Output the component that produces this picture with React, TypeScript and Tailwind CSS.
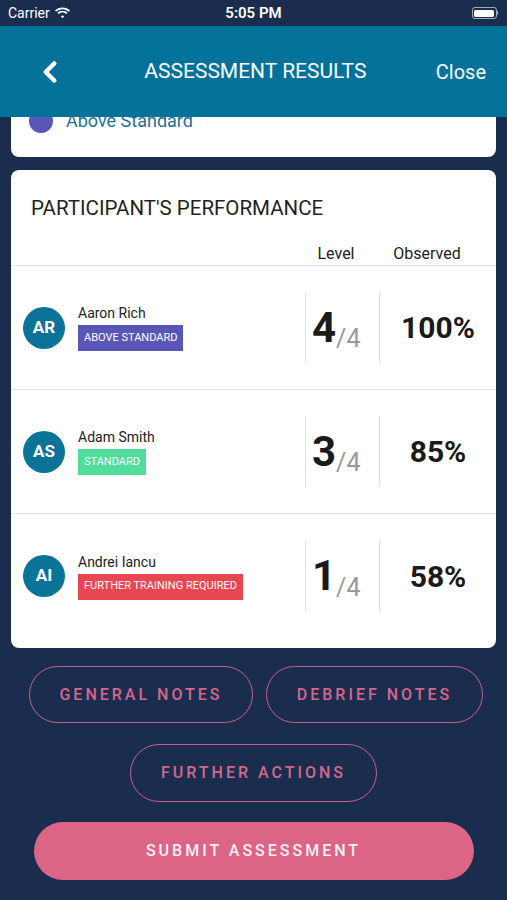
import { ChevronLeft } from "lucide-react";

type Participant = {
  initials: string;
  name: string;
  badge: string;
  badgeClass: string;
  level: number;
  observed: string;
};

const PARTICIPANTS: Participant[] = [
  {
    initials: "AR",
    name: "Aaron Rich",
    badge: "ABOVE STANDARD",
    badgeClass: "bg-[#5a56b8]",
    level: 4,
    observed: "100%",
  },
  {
    initials: "AS",
    name: "Adam Smith",
    badge: "STANDARD",
    badgeClass: "bg-[#52dc9c]",
    level: 3,
    observed: "85%",
  },
  {
    initials: "AI",
    name: "Andrei Iancu",
    badge: "FURTHER TRAINING REQUIRED",
    badgeClass: "bg-[#e9474f]",
    level: 1,
    observed: "58%",
  },
];

function StatusBar() {
  return (
    <div className="h-[26px] flex items-center justify-between px-2 text-white font-['Roboto',sans-serif]">
      <div className="flex items-center gap-1 w-[120px]">
        <span className="text-[14px]">Carrier</span>
        <svg width="17" height="12" viewBox="0 0 17 12" fill="white">
          <path d="M8.5 2.2c2.4 0 4.6.9 6.3 2.5l1.2-1.3C14 1.5 11.4.4 8.5.4S3 1.5 1 3.4l1.2 1.3C3.9 3.1 6.1 2.2 8.5 2.2z" />
          <path d="M8.5 5.5c1.5 0 2.9.6 3.9 1.5l1.2-1.3C12.3 4.5 10.5 3.7 8.5 3.7S4.7 4.5 3.4 5.7l1.2 1.3c1-.9 2.4-1.5 3.9-1.5z" />
          <path d="M8.5 8.6c.7 0 1.3.3 1.7.7L8.5 11.2 6.8 9.3c.4-.4 1-.7 1.7-.7z" />
        </svg>
      </div>
      <span className="text-[15px] font-semibold">5:05 PM</span>
      <div className="w-[120px] flex justify-end pr-[1px]">
        <div className="flex items-center">
          <div className="w-[25px] h-[12px] rounded-[3px] border border-white/60 p-[1.5px]">
            <div className="w-full h-full rounded-[1.5px] bg-white" />
          </div>
          <div className="w-[1.5px] h-[4px] bg-white/60 rounded-r" />
        </div>
      </div>
    </div>
  );
}

function Row({ p, last }: { p: Participant; last: boolean }) {
  return (
    <div
      className={
        "flex items-stretch h-[124px] " + (last ? "" : "border-b border-[#e6e6e6]")
      }
    >
      <div className="flex-1 flex items-center pl-3 gap-[13px]">
        <div className="w-[42px] h-[42px] rounded-full bg-[#0c7398] flex items-center justify-center text-white text-[17px] font-bold">
          {p.initials}
        </div>
        <div className="flex flex-col gap-[3px]">
          <span className="text-[14px] text-[#222] leading-[18px]">{p.name}</span>
          <span
            className={
              "self-start h-[26px] px-[6px] flex items-center text-[11px] text-white " +
              p.badgeClass
            }
          >
            {p.badge}
          </span>
        </div>
      </div>
      <div className="w-[74px] my-[26px] border-l border-[#e2e2e2] flex items-center pl-[6px]">
        <span className="text-[42px] font-bold text-[#1a1a1a] leading-none">{p.level}</span>
        <span className="text-[25px] text-[#999] leading-none mt-[22px]">/4</span>
      </div>
      <div className="w-[117px] my-[26px] border-l border-[#e2e2e2] flex items-center justify-center">
        <span className="text-[30px] font-bold text-[#1a1a1a]">{p.observed}</span>
      </div>
    </div>
  );
}

export default function App() {
  return (
    <div className="w-[507px] h-[900px] bg-[#1a2d4f] font-['Roboto',sans-serif] overflow-hidden flex flex-col">
      <StatusBar />
      <div className="h-[91px] bg-[#03729a] flex items-center px-[34px] text-white relative z-10">
        <ChevronLeft size={34} strokeWidth={3.2} className="-ml-[1px]" />
        <span className="flex-1 text-center text-[21px] pl-[8px]">ASSESSMENT RESULTS</span>
        <span className="text-[20px] -mr-[13px]">Close</span>
      </div>

      <div className="mx-[11px] h-[40px] bg-white rounded-b-[8px] overflow-hidden">
        <div className="-mt-[10px] flex items-center gap-[13px] pl-[18px]">
          <div className="w-[24px] h-[24px] rounded-full bg-[#5a56b8]" />
          <span className="text-[18px] text-[#1f6f95]">Above Standard</span>
        </div>
      </div>

      <div className="mx-[11px] mt-[13px] bg-white rounded-[8px] overflow-hidden pb-[10px]">
        <div className="pl-5 pt-[26px] text-[20.5px] text-[#1f1f1f] leading-[24px]">
          PARTICIPANT&apos;S PERFORMANCE
        </div>
        <div className="flex justify-end h-[46px] items-end border-b border-[#e6e6e6] text-[16px] text-[#222] leading-[22px]">
          <span className="w-[60px] text-center">Level</span>
          <span className="w-[80px] text-center ml-[21px] mr-[29px]">Observed</span>
        </div>
        {PARTICIPANTS.map((p, i) => (
          <Row key={p.initials} p={p} last={i === PARTICIPANTS.length - 1} />
        ))}
      </div>

      <div className="flex flex-col items-center mt-[18px]">
        <div className="flex gap-[13px] pl-[5px]">
          <button className="w-[224px] h-[57px] rounded-full border border-[#c95f8a] text-[#d6668c] text-[16px] font-medium tracking-[3px]">
            GENERAL NOTES
          </button>
          <button className="w-[217px] h-[57px] rounded-full border border-[#c95f8a] text-[#d6668c] text-[16px] font-medium tracking-[3px]">
            DEBRIEF NOTES
          </button>
        </div>
        <button className="mt-[21px] w-[247px] h-[58px] rounded-full border border-[#c95f8a] text-[#d6668c] text-[16px] font-medium tracking-[3px]">
          FURTHER ACTIONS
        </button>
        <button className="mt-[20px] w-[440px] h-[58px] rounded-full bg-[#dc6586] text-[#fdf0f3] text-[16px] font-medium tracking-[3px]">
          SUBMIT ASSESSMENT
        </button>
      </div>
    </div>
  );
}
